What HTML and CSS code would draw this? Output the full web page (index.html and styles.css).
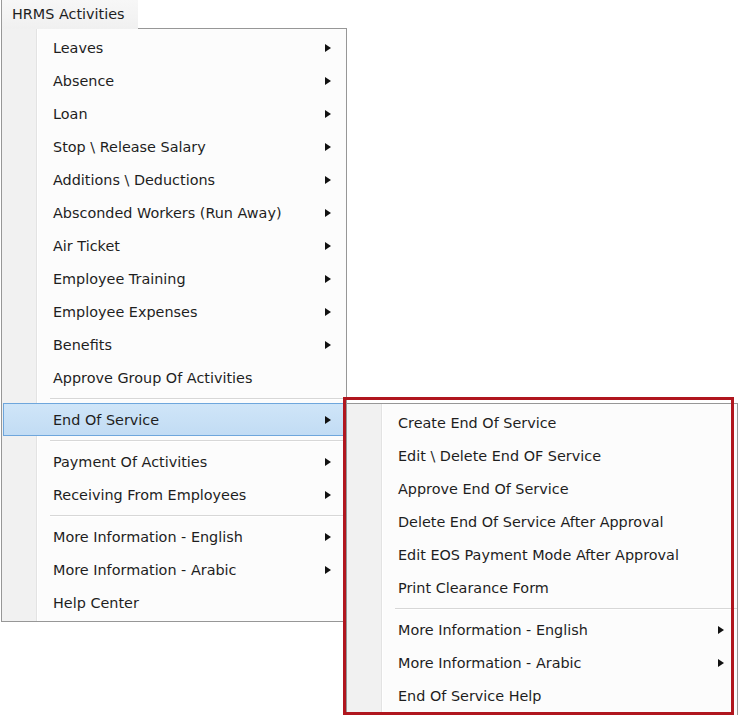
FILE: index.html
```html
<!DOCTYPE html>
<html>
<head>
<meta charset="utf-8">
<link rel="stylesheet" href="styles.css">
</head>
<body>
<div class="menubar">
  <div class="tab">HRMS Activities</div>
  <div class="menu main">
    <div class="item">Leaves<span class="arrow"></span></div>
    <div class="item">Absence<span class="arrow"></span></div>
    <div class="item">Loan<span class="arrow"></span></div>
    <div class="item">Stop \ Release Salary<span class="arrow"></span></div>
    <div class="item">Additions \ Deductions<span class="arrow"></span></div>
    <div class="item">Absconded Workers (Run Away)<span class="arrow"></span></div>
    <div class="item">Air Ticket<span class="arrow"></span></div>
    <div class="item">Employee Training<span class="arrow"></span></div>
    <div class="item">Employee Expenses<span class="arrow"></span></div>
    <div class="item">Benefits<span class="arrow"></span></div>
    <div class="item">Approve Group Of Activities</div>
    <div class="sep"></div>
    <div class="item active">End Of Service<span class="arrow"></span></div>
    <div class="sep"></div>
    <div class="item">Payment Of Activities<span class="arrow"></span></div>
    <div class="item">Receiving From Employees<span class="arrow"></span></div>
    <div class="sep"></div>
    <div class="item">More Information - English<span class="arrow"></span></div>
    <div class="item">More Information - Arabic<span class="arrow"></span></div>
    <div class="item">Help Center</div>
  </div>
  <div class="menu submenu">
    <div class="item">Create End Of Service</div>
    <div class="item">Edit \ Delete End OF Service</div>
    <div class="item">Approve End Of Service</div>
    <div class="item">Delete End Of Service After Approval</div>
    <div class="item">Edit EOS Payment Mode After Approval</div>
    <div class="item">Print Clearance Form</div>
    <div class="sep"></div>
    <div class="item">More Information - English<span class="arrow"></span></div>
    <div class="item">More Information - Arabic<span class="arrow"></span></div>
    <div class="item">End Of Service Help</div>
  </div>
  <div class="callout"></div>
</div>
</body>
</html>
```

FILE: styles.css
```css
html {
  overflow: hidden;
}

body {
  margin: 0;
  padding: 0;
  background: #ffffff;
  height: 715px;
}

.menubar {
  position: relative;
  height: 715px;
  font-family: "DejaVu Sans", "Liberation Sans", sans-serif;
  font-size: 14.4px;
  color: #1e1e1e;
}

.tab {
  position: relative;
  z-index: 1;
  box-sizing: border-box;
  margin-left: 1px;
  margin-bottom: -1px;
  width: 137px;
  height: 29px;
  padding-left: 10px;
  padding-top: 6px;
  border-left: 1px solid #9a9a9a;
  background: linear-gradient(to bottom, #f7f7f7, #f0f0f0);
}

.menu {
  box-sizing: border-box;
  border: 1px solid #979797;
  padding: 2px 0;
  background: linear-gradient(to right, #f1f1f1 0 34px, #e3e3e3 34px 35px, #ffffff 35px 36px, #fcfcfc 36px);
}

.main {
  margin-left: 1px;
  width: 346px;
}

.submenu {
  position: absolute;
  left: 346px;
  top: 403px;
  width: 392px;
  height: 320px;
}

.item {
  box-sizing: border-box;
  height: 33px;
  display: flex;
  align-items: center;
  padding-left: 51px;
  padding-right: 15px;
  white-space: nowrap;
}

.submenu .item {
  padding-right: 13px;
}

.item.active {
  margin: 0 2px 0 1px;
  padding-left: 49px;
  padding-right: 12px;
  border: 1px solid #6ea6dc;
  background: linear-gradient(to bottom, #cfe5f8, #c2dcf4);
}

.arrow {
  margin-left: auto;
  width: 0;
  height: 0;
  border-left: 6px solid #111;
  border-top: 4.5px solid transparent;
  border-bottom: 4.5px solid transparent;
}

.sep {
  height: 9px;
  display: flex;
  align-items: center;
  padding-left: 48px;
}

.sep::before {
  content: "";
  flex: 1;
  height: 1px;
  background: #d7d7d7;
  box-shadow: 0 1px 0 #ffffff;
}

.callout {
  position: absolute;
  z-index: 2;
  left: 343px;
  top: 397px;
  width: 391px;
  height: 318px;
  box-sizing: border-box;
  border: 3px solid #b0161e;
}
```
